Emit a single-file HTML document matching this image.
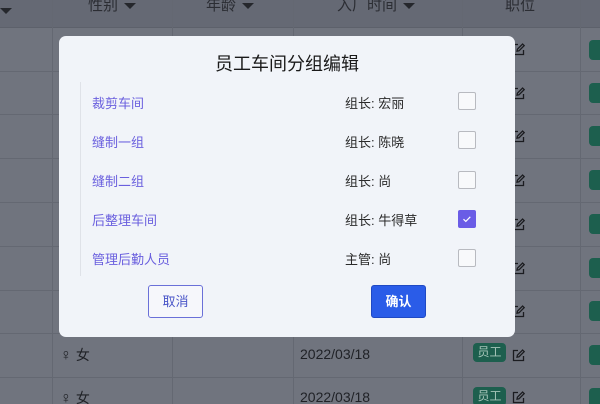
<!DOCTYPE html>
<html style="width:600px;height:404px;overflow:hidden"><head><meta charset="utf-8"><style>
*{margin:0;padding:0;box-sizing:border-box}
body{width:600px;height:404px;overflow:hidden;position:relative;background:#70747e;font-family:"Liberation Sans","Noto Sans CJK SC",sans-serif;color:#1e2024}
.hdr{position:absolute;left:0;top:0;width:600px;height:28px;background:#656974;border-bottom:1px solid #5d616b}
.vl{position:absolute;top:0;height:404px;width:1px;background:#646872}
.hl{position:absolute;left:0;width:600px;height:1px;background:#646872}
.ht{position:absolute;top:-6px;font-size:15px;color:#2b2d33}
.tri{display:inline-block;width:0;height:0;border-left:6px solid transparent;border-right:6px solid transparent;border-top:6px solid #25272c;margin-left:6px;vertical-align:middle}
.ed{position:absolute;left:512px;width:13px;height:13px}
.gt{position:absolute;left:589px;width:20px;height:20px;background:#1d5f4e;border-radius:4px}
.cell{position:absolute;font-size:14px;color:#1f2126}
.g{font-size:16px}
.tag{position:absolute;left:473px;width:33px;height:19px;background:#1d5f4e;border-radius:4px;color:#a4c4b8;font-size:12px;text-align:center;line-height:19px}
.modal{position:absolute;left:59px;top:36px;width:456px;height:301px;background:#f1f4f9;border-radius:7px}
.title{position:absolute;left:0;width:456px;top:14px;text-align:center;font-size:18px;color:#1a1a1a}
.bar{position:absolute;left:21px;top:46px;width:1px;height:194px;background:#dfe2e8}
.lb{position:absolute;left:33px;font-size:13px;color:#6a5fde}
.ld{position:absolute;left:286px;font-size:13px;color:#2a2a2a}
.cb{position:absolute;left:399px;width:18px;height:18px;border:1px solid #b8bac0;border-radius:2px;background:#f8f9fb}
.btn{position:absolute;top:249px;width:55px;height:33px;border-radius:3px;font-size:13px;text-align:center;line-height:31px}
</style></head><body>
<div class="hdr"></div>
<div class="vl" style="left:52px"></div>
<div class="vl" style="left:172px"></div>
<div class="vl" style="left:293px"></div>
<div class="vl" style="left:462px"></div>
<div class="vl" style="left:580px"></div>
<div class="hl" style="top:71px"></div>
<div class="hl" style="top:114px"></div>
<div class="hl" style="top:158px"></div>
<div class="hl" style="top:202px"></div>
<div class="hl" style="top:246px"></div>
<div class="hl" style="top:290px"></div>
<div class="hl" style="top:333px"></div>
<div class="hl" style="top:377px"></div>
<div class="ht" style="left:88px">性别<span class="tri"></span></div>
<div class="ht" style="left:206px">年龄<span class="tri"></span></div>
<div class="ht" style="left:337px">入厂时间<span class="tri"></span></div>
<div class="ht" style="left:505px">职位</div>
<div class="tri" style="position:absolute;left:-6px;top:8px"></div>

<svg class="ed" style="top:43px" viewBox="0 0 13 13" fill="none" stroke="#1b1c20" stroke-width="1.3"><path d="M6 1.5H1.5v10h10V7"/><path d="M5 8.2l.4-2L10.6 1l1.6 1.6L7 7.8z"/></svg>
<svg class="ed" style="top:87px" viewBox="0 0 13 13" fill="none" stroke="#1b1c20" stroke-width="1.3"><path d="M6 1.5H1.5v10h10V7"/><path d="M5 8.2l.4-2L10.6 1l1.6 1.6L7 7.8z"/></svg>
<svg class="ed" style="top:130px" viewBox="0 0 13 13" fill="none" stroke="#1b1c20" stroke-width="1.3"><path d="M6 1.5H1.5v10h10V7"/><path d="M5 8.2l.4-2L10.6 1l1.6 1.6L7 7.8z"/></svg>
<svg class="ed" style="top:174px" viewBox="0 0 13 13" fill="none" stroke="#1b1c20" stroke-width="1.3"><path d="M6 1.5H1.5v10h10V7"/><path d="M5 8.2l.4-2L10.6 1l1.6 1.6L7 7.8z"/></svg>
<svg class="ed" style="top:218px" viewBox="0 0 13 13" fill="none" stroke="#1b1c20" stroke-width="1.3"><path d="M6 1.5H1.5v10h10V7"/><path d="M5 8.2l.4-2L10.6 1l1.6 1.6L7 7.8z"/></svg>
<svg class="ed" style="top:262px" viewBox="0 0 13 13" fill="none" stroke="#1b1c20" stroke-width="1.3"><path d="M6 1.5H1.5v10h10V7"/><path d="M5 8.2l.4-2L10.6 1l1.6 1.6L7 7.8z"/></svg>
<svg class="ed" style="top:305px" viewBox="0 0 13 13" fill="none" stroke="#1b1c20" stroke-width="1.3"><path d="M6 1.5H1.5v10h10V7"/><path d="M5 8.2l.4-2L10.6 1l1.6 1.6L7 7.8z"/></svg>
<svg class="ed" style="top:349px" viewBox="0 0 13 13" fill="none" stroke="#1b1c20" stroke-width="1.3"><path d="M6 1.5H1.5v10h10V7"/><path d="M5 8.2l.4-2L10.6 1l1.6 1.6L7 7.8z"/></svg>
<svg class="ed" style="top:391px" viewBox="0 0 13 13" fill="none" stroke="#1b1c20" stroke-width="1.3"><path d="M6 1.5H1.5v10h10V7"/><path d="M5 8.2l.4-2L10.6 1l1.6 1.6L7 7.8z"/></svg>

<div class="gt" style="top:40px"></div>
<div class="gt" style="top:83px"></div>
<div class="gt" style="top:126px"></div>
<div class="gt" style="top:170px"></div>
<div class="gt" style="top:214px"></div>
<div class="gt" style="top:258px"></div>
<div class="gt" style="top:301px"></div>
<div class="gt" style="top:345px"></div>
<div class="gt" style="top:388px"></div>

<div class="cell" style="left:60px;top:345px"><span class="g">♀</span> 女</div>
<div class="cell" style="left:300px;top:346px">2022/03/18</div>
<div class="tag" style="top:343px">员工</div>
<div class="cell" style="left:60px;top:388px"><span class="g">♀</span> 女</div>
<div class="cell" style="left:300px;top:389px">2022/03/18</div>
<div class="tag" style="top:387px">员工</div>

<div class="modal">
<div class="title">员工车间分组编辑</div>
<div class="bar"></div>
<div class="lb" style="top:57px">裁剪车间</div><div class="ld" style="top:57px">组长: 宏丽</div><div class="cb" style="top:56px"></div>
<div class="lb" style="top:96px">缝制一组</div><div class="ld" style="top:96px">组长: 陈晓</div><div class="cb" style="top:95px"></div>
<div class="lb" style="top:135px">缝制二组</div><div class="ld" style="top:135px">组长: 尚</div><div class="cb" style="top:135px"></div>
<div class="lb" style="top:174px">后整理车间</div><div class="ld" style="top:174px">组长: 牛得草</div>
<div class="cb" style="top:174px;background:#6a5ce6;border-color:#6a5ce6"><svg width="16" height="16" viewBox="0 0 16 16" fill="none" stroke="#fff" stroke-width="1.2" style="position:absolute;left:0;top:0"><path d="M4.5 8.2l2.3 2.2 4.5-4.6"/></svg></div>
<div class="lb" style="top:213px">管理后勤人员</div><div class="ld" style="top:213px">主管: 尚</div><div class="cb" style="top:213px"></div>
<div class="btn" style="left:89px;border:1px solid #6a70d8;color:#4a56c8;background:#f6f7fb">取消</div>
<div class="btn" style="left:312px;background:#2a5ce8;border:1px solid #1f49c4;color:#fff;font-weight:bold">确认</div>
</div>
</body></html>
